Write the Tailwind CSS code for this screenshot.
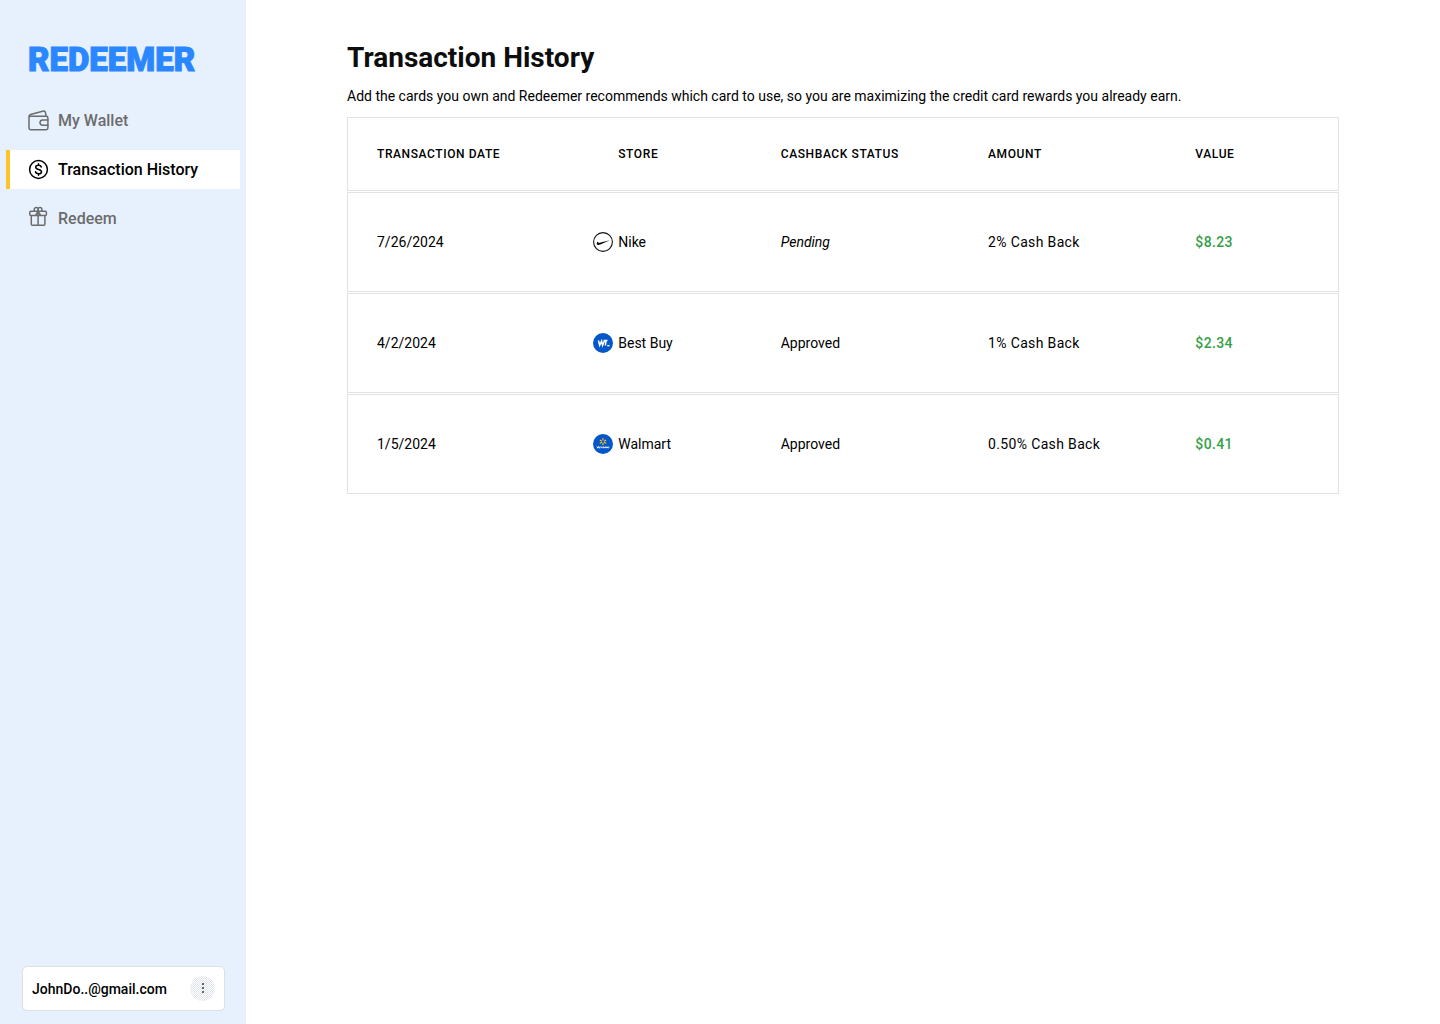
<!DOCTYPE html>
<html lang="en">
<head>
    <meta charset="UTF-8">
    <meta name="viewport" content="width=device-width, initial-scale=1.0">
    <title>Redeemer - Transaction History</title>
    <script src="https://cdn.jsdelivr.net/npm/@tailwindcss/browser@4"></script>
</head>
<body class="flex min-h-screen bg-white font-['Roboto',sans-serif] text-black">

    <!-- Sidebar -->
    <aside class="flex w-[246px] shrink-0 flex-col bg-[#e7f1fe] pt-10">
        <a href="#" class="ml-7 text-[33px] leading-10 font-black text-[#2a87ff] [-webkit-text-stroke:1px_#2a87ff]">REDEEMER</a>

        <nav class="mt-[21px] flex flex-col gap-[10px] px-[6px] font-medium text-[#6c6c6c]">
            <a href="#" class="flex h-[39px] items-center gap-[9px] border-l-4 border-transparent pl-[18px]">
                <svg class="size-[21px]" viewBox="0 0 21 21" fill="none" stroke="currentColor" stroke-width="1.5" stroke-linejoin="round" stroke-linecap="round">
                    <path d="M1 6.2h17.2c1 0 1.7.7 1.7 1.7v10.2c0 1-.7 1.7-1.7 1.7H2.7c-1 0-1.7-.7-1.7-1.7zC1 5.3 1.6 4.7 2.5 4.4L15.600 1.100c.9-.2 1.600.3 1.800 1.200l.8 3.900"/>
                    <path d="M19.900 9.900h-5.200a2.700 2.700 0 0 0 0 5.400h5.200"/>
                </svg>
                My Wallet
            </a>
            <a href="#" aria-current="page" class="flex h-[39px] items-center gap-[9px] border-l-4 border-[#ffc526] bg-white pl-[18px] text-black">
                <svg class="size-[21px]" viewBox="0 0 21 21" fill="none" stroke="currentColor" stroke-width="1.5" stroke-linecap="round">
                    <circle cx="10.5" cy="10.5" r="8.9"/>
                    <path d="M13.300 8c-.3-1.100-1.300-1.800-2.800-1.800-1.600 0-2.800.8-2.800 2.100 0 3 5.800 1.400 5.800 4.400 0 1.300-1.200 2.100-2.900 2.100-1.800 0-2.900-.8-3.100-2.100M10.500 4.800v1.400M10.500 14.800v1.500"/>
                </svg>
                Transaction History
            </a>
            <a href="#" class="flex h-[39px] items-center gap-[9px] border-l-4 border-transparent pl-[18px]">
                <svg class="mb-1 size-[21px]" viewBox="0 0 21 21" fill="none" stroke="currentColor" stroke-width="1.5" stroke-linejoin="round">
                    <rect x="1.8" y="5.2" width="16.6" height="4.3" rx="1"/>
                    <path d="M3.300 9.500v8.800c0 .6.400 1 1 1h11.600c.6 0 1-.4 1-1V9.500M10.100 3.300v16M10.100 5.200 7.600 9.300M10.100 5.200l2.500 4.100"/>
                    <path d="M10.100 5.200V3.300a1.900 1.900 0 0 0-3.800 0v1.900M10.100 3.300a1.900 1.900 0 0 1 3.800 0v1.900"/>
                </svg>
                Redeem
            </a>
        </nav>

        <div class="mt-auto mr-[21px] mb-[13px] ml-[22px] flex h-[45px] items-center justify-between rounded-[5px] border border-[#dcdfe3] bg-white px-[9px] text-sm font-medium">
            JohnDo..@gmail.com
            <button type="button" aria-label="Account menu" class="size-[25px] rounded-full bg-white bg-[image:repeating-conic-gradient(#e0e5ed_0_25%,#ffffff_0_50%)] bg-[length:2px_2px] text-[#5c6878]">
                <svg class="size-[25px]" viewBox="0 0 25 25" fill="currentColor">
                    <rect x="12" y="7" width="2" height="2"/>
                    <rect x="12" y="11" width="2" height="2"/>
                    <rect x="12" y="15" width="2" height="2"/>
                </svg>
            </button>
        </div>
    </aside>

    <!-- Content -->
    <main class="min-w-0 flex-1 px-[101px] pt-[38px]">
        <h1 class="text-[28px] leading-10 font-bold text-[#0d0d0d]">Transaction History</h1>
        <p class="mt-2 text-sm">Add the cards you own and Redeemer recommends which card to use, so you are maximizing the credit card rewards you already earn.</p>

        <table class="mt-[10px] w-full table-fixed border-separate border-spacing-x-0 border-spacing-y-px text-left text-sm">
            <thead class="text-xs">
                <tr class="h-[74px]">
                    <th class="w-[21.8%] border-y border-l border-[#e2e2e2] pl-[29px] font-medium tracking-wider">TRANSACTION DATE</th>
                    <th class="w-[18.9%] border-y border-[#e2e2e2] pl-[55px] font-medium tracking-wider">STORE</th>
                    <th class="w-[20.9%] border-y border-[#e2e2e2] pl-[30px] font-medium tracking-wider">CASHBACK STATUS</th>
                    <th class="w-[20.9%] border-y border-[#e2e2e2] pl-[30px] font-medium tracking-wider">AMOUNT</th>
                    <th class="border-y border-r border-[#e2e2e2] pl-[30px] font-medium tracking-wider">VALUE</th>
                </tr>
            </thead>
            <tbody>
                <tr class="h-[100px]">
                    <td class="border-y border-l border-[#e2e2e2] pl-[29px]">7/26/2024</td>
                    <td class="border-y border-[#e2e2e2] pl-[30px]">
                        <div class="flex items-center gap-[5px]">
                            <svg class="size-5" viewBox="0 0 20 20">
                                <circle cx="10" cy="10" r="9.4" fill="#fff" stroke="#111" stroke-width="1.1"/>
                                <path d="M16.800 8.300 7.200 12.500c-2.300.9-3.900.3-3.400-1.200.2-.6.700-1.200 1.200-1.700-.3 1 .3 1.400 1.700 1.100z" fill="#000"/>
                            </svg>
                            Nike
                        </div>
                    </td>
                    <td class="border-y border-[#e2e2e2] pl-[30px] italic">Pending</td>
                    <td class="border-y border-[#e2e2e2] pl-[30px] tracking-wide">2% Cash Back</td>
                    <td class="border-y border-r border-[#e2e2e2] pl-[30px] font-medium tracking-wide text-[#34a047]">$8.23</td>
                </tr>
                <tr class="h-[100px]">
                    <td class="border-y border-l border-[#e2e2e2] pl-[29px]">4/2/2024</td>
                    <td class="border-y border-[#e2e2e2] pl-[30px]">
                        <div class="flex items-center gap-[5px]">
                            <svg class="size-5" viewBox="0 0 20 20">
                                <circle cx="10" cy="10" r="10" fill="#0457c8"/>
                                <path d="m5.400 7.500 1.300 4.800L8.600 8l1 4.300 2-4.800M10.500 7.600h4M13 7.600l-.6 4.900" fill="none" stroke="#fff" stroke-width="1.5"/>
                                <path d="M14.200 12h2.300v1.300h-2.300z" fill="#fff"/>
                            </svg>
                            Best Buy
                        </div>
                    </td>
                    <td class="border-y border-[#e2e2e2] pl-[30px]">Approved</td>
                    <td class="border-y border-[#e2e2e2] pl-[30px] tracking-wide">1% Cash Back</td>
                    <td class="border-y border-r border-[#e2e2e2] pl-[30px] font-medium tracking-wide text-[#34a047]">$2.34</td>
                </tr>
                <tr class="h-[100px]">
                    <td class="border-y border-l border-[#e2e2e2] pl-[29px]">1/5/2024</td>
                    <td class="border-y border-[#e2e2e2] pl-[30px]">
                        <div class="flex items-center gap-[5px]">
                            <svg class="size-5" viewBox="0 0 20 20">
                                <circle cx="10" cy="10" r="10" fill="#0457c8"/>
                                <path d="M10 4.600v1.500M10 9.200v1.500M7.300 6.200l1.200.7M11.500 8.400l1.200.7M12.700 6.200l-1.200.7M8.500 8.400l-1.200.7" stroke="#ffc220" stroke-width="1.2" stroke-linecap="round"/>
                                <path d="m4 12.500.8 1.700.8-1.700.8 1.700.8-1.700M7.800 14.200l.9-1.500.9 1.500M10.600 14.200v-1.500l.9 1 .9-1v1.500M13.300 14.200l.7-1.500.8 1.500M15.800 12.500v1.700" fill="none" stroke="#e6effb" stroke-width="1"/>
                            </svg>
                            Walmart
                        </div>
                    </td>
                    <td class="border-y border-[#e2e2e2] pl-[30px]">Approved</td>
                    <td class="border-y border-[#e2e2e2] pl-[30px] tracking-wide">0.50% Cash Back</td>
                    <td class="border-y border-r border-[#e2e2e2] pl-[30px] font-medium tracking-wide text-[#34a047]">$0.41</td>
                </tr>
            </tbody>
        </table>
    </main>

</body>
</html>
